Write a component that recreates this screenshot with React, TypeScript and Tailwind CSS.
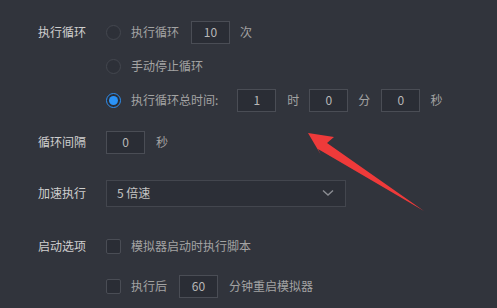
import React from 'react'

const font = { fontFamily: '"Noto Sans CJK SC", "Noto Sans", sans-serif' }

function Radio({ checked }: { checked?: boolean }) {
  return checked ? (
    <span className="flex h-[15px] w-[15px] shrink-0 items-center justify-center rounded-full border-[1.5px] border-[#2f8ff0] bg-[#2a2d35]">
      <span className="h-[9px] w-[9px] rounded-full bg-[#2b93f7]" />
    </span>
  ) : (
    <span className="h-[15px] w-[15px] shrink-0 rounded-full border border-[#44474f] bg-[#2d3038]" />
  )
}

function Checkbox() {
  return (
    <span className="h-[15px] w-[15px] shrink-0 rounded-[2px] border border-[#4a4d55] bg-[#2a2d35]" />
  )
}

function Box({ value, className = '' }: { value: string; className?: string }) {
  return (
    <span
      className={`flex h-[23px] w-[39px] shrink-0 items-center justify-center border border-[#4a4d55] bg-[#2a2d35] text-[12px] text-[#b8b8b8] ${className}`}
    >
      {value}
    </span>
  )
}

function Row({
  label,
  className = '',
  children,
}: {
  label?: string
  className?: string
  children: React.ReactNode
}) {
  return (
    <div className={`flex h-[34px] items-center ${className}`}>
      <span className="w-[68px] shrink-0 text-[12px] text-[#cfcfcf]">{label}</span>
      {children}
    </div>
  )
}

export default function App() {
  return (
    <div
      className="relative h-[308px] w-[497px] overflow-hidden bg-[#31343c] pl-[38px] pt-[15px] text-[12px] text-[#a3a3a3]"
      style={font}
    >
      <Row label="执行循环">
        <Radio />
        <span className="ml-[10px]">执行循环</span>
        <Box value="10" className="ml-[12px]" />
        <span className="ml-[10px]">次</span>
      </Row>
      <Row>
        <Radio />
        <span className="ml-[10px]">手动停止循环</span>
      </Row>
      <Row>
        <Radio checked />
        <span className="ml-[10px]">执行循环总时间:</span>
        <Box value="1" className="ml-[19px]" />
        <span className="ml-[11px]">时</span>
        <Box value="0" className="ml-[10px]" />
        <span className="ml-[10px]">分</span>
        <Box value="0" className="ml-[11px]" />
        <span className="ml-[10px]">秒</span>
      </Row>

      <Row label="循环间隔" className="mt-[8px]">
        <Box value="0" />
        <span className="ml-[11px]">秒</span>
      </Row>

      <Row label="加速执行" className="mt-[17px]">
        <div className="flex h-[27px] w-[240px] items-center justify-between border border-[#43464e] bg-[#2c2f37] pl-[10px] pr-[11px] text-[#c4c4c4]">
          <span>5 倍速</span>
          <svg width="12" height="8" viewBox="0 0 12 8" fill="none">
            <path d="M1 1.5 L6 6 L11 1.5" stroke="#8b8d93" strokeWidth="1.4" />
          </svg>
        </div>
      </Row>

      <Row label="启动选项" className="mt-[19px]">
        <Checkbox />
        <span className="ml-[10px]">模拟器启动时执行脚本</span>
      </Row>
      <Row className="mt-[6px]">
        <Checkbox />
        <span className="ml-[10px]">执行后</span>
        <Box value="60" className="ml-[12px] w-[38px]" />
        <span className="ml-[11px]">分钟重启模拟器</span>
      </Row>

      <svg
        className="pointer-events-none absolute left-0 top-0"
        width="497"
        height="308"
        viewBox="0 0 497 308"
      >
        <polygon
          points="308,133 334,137 327,143 424,211 318,149 321,155"
          fill="#ee3a3a"
        />
      </svg>
    </div>
  )
}
